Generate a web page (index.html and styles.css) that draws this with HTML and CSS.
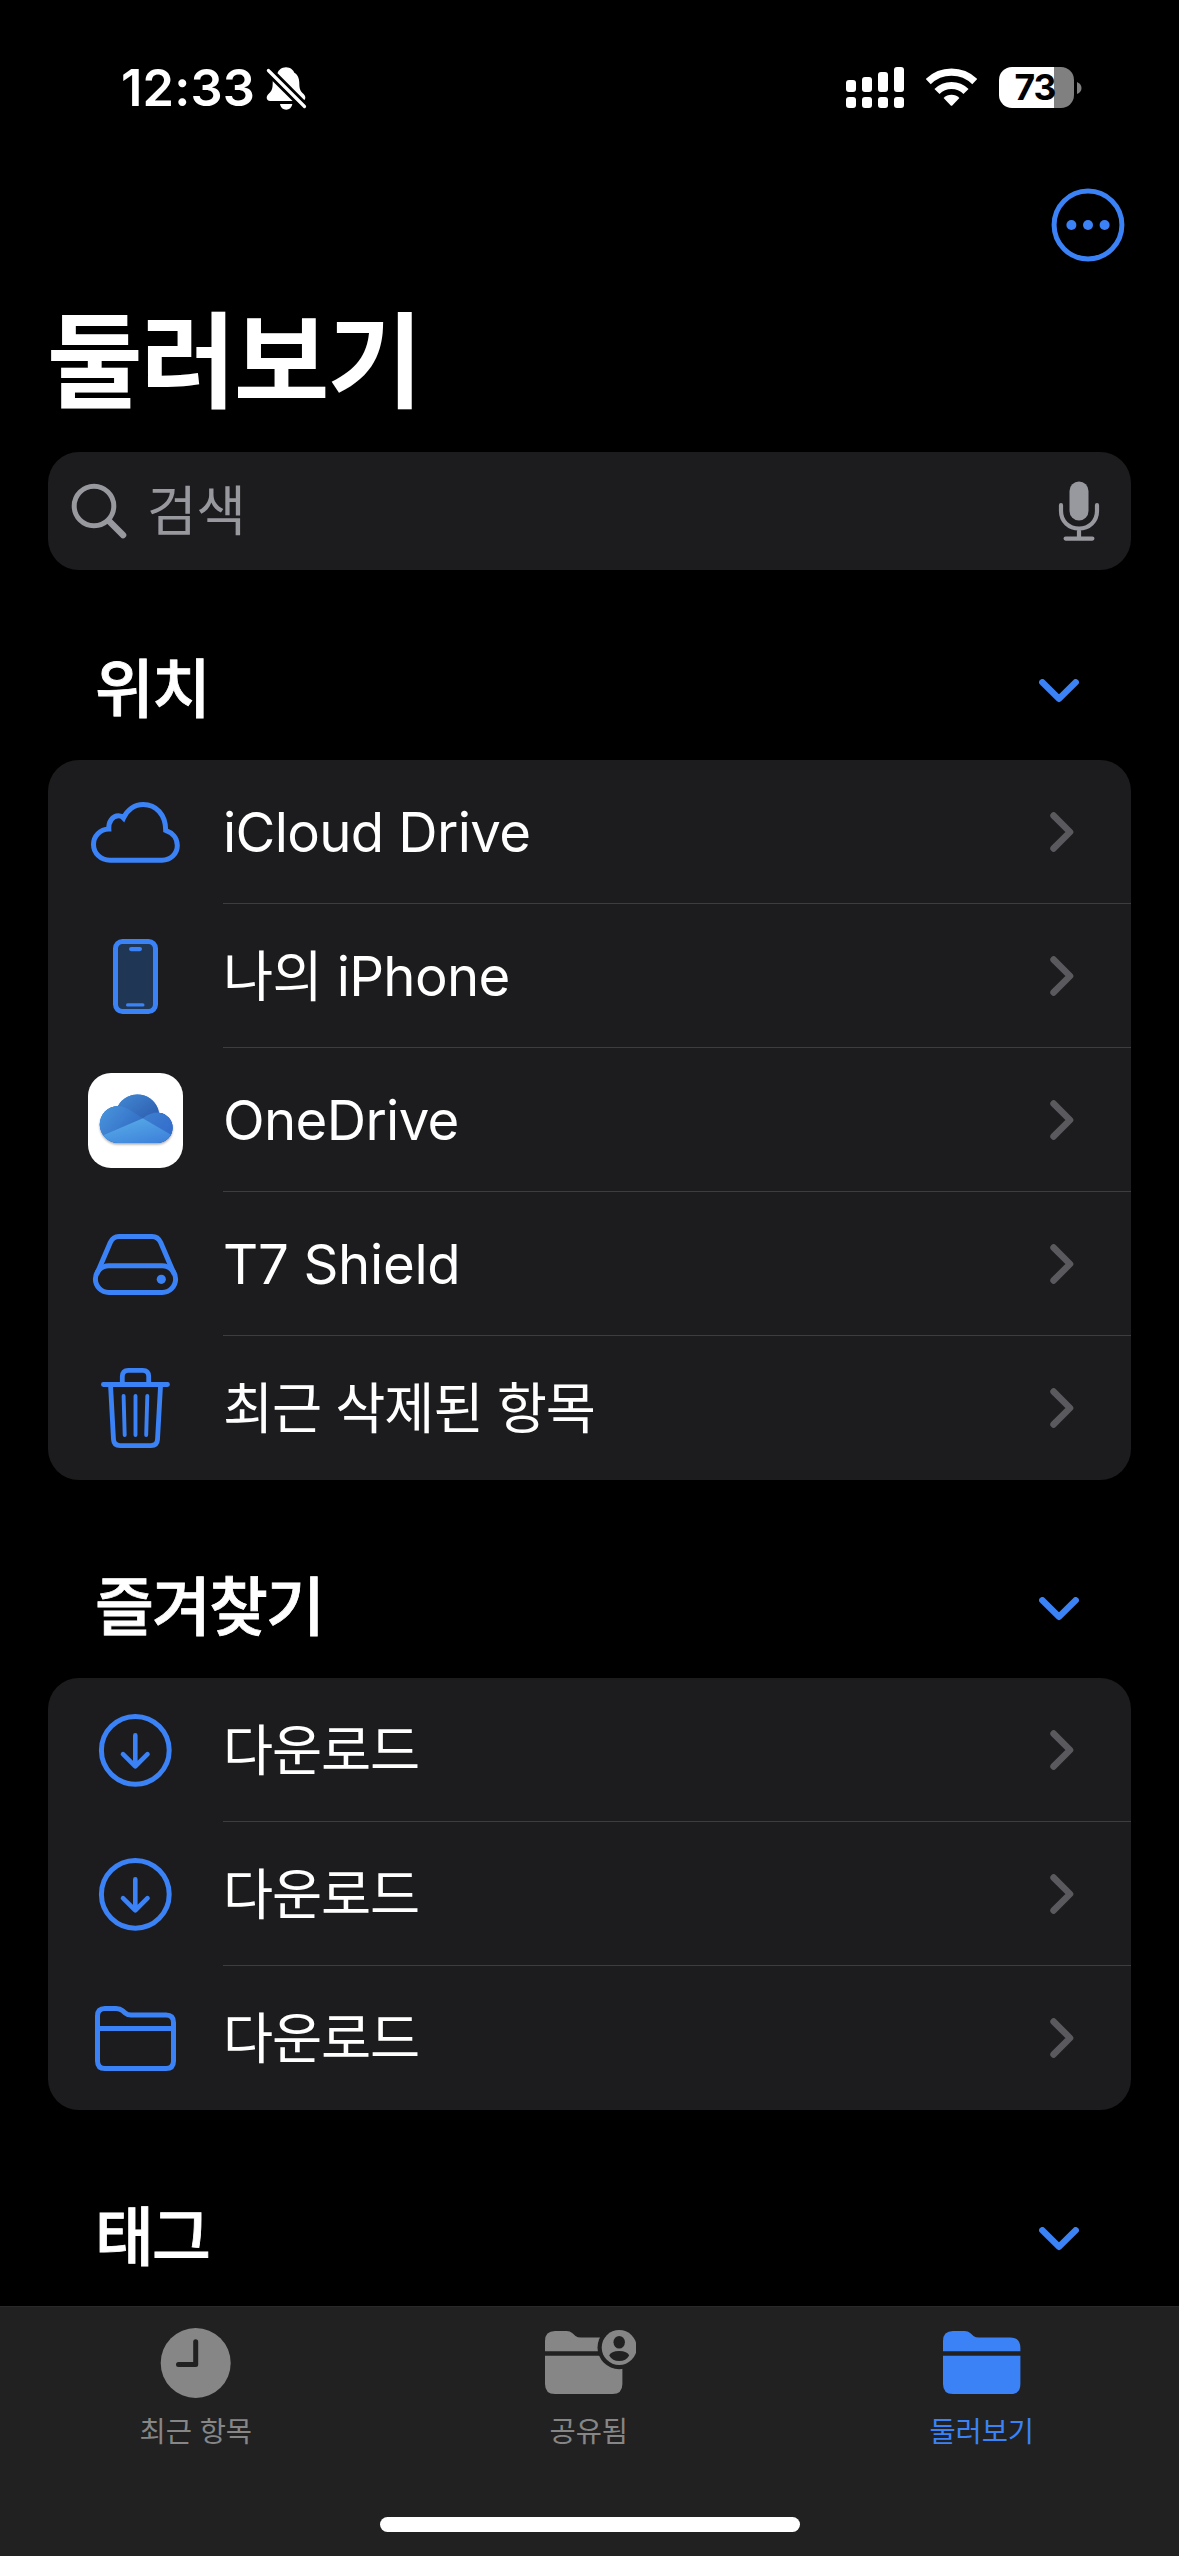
FILE: index.html
```html
<!DOCTYPE html>
<html lang="ko">
<head>
<meta charset="utf-8">
<title>둘러보기</title>
<link rel="stylesheet" href="styles.css">
</head>
<body>
<svg class="defs" width="0" height="0" aria-hidden="true">
  <defs>
    <symbol id="chevron-right" viewBox="0 0 24 40"><path d="M3.6 3.6 20 20 3.6 36.4" fill="none" stroke="currentColor" stroke-width="6.6" stroke-linecap="round" stroke-linejoin="round"/></symbol>
    <symbol id="chevron-down" viewBox="0 0 40 24"><path d="M3.3 3.3 20 19.8 36.7 3.3" fill="none" stroke="currentColor" stroke-width="6.4" stroke-linecap="round" stroke-linejoin="round"/></symbol>
    <symbol id="download" viewBox="0 0 96 96"><g fill="none" stroke="currentColor" stroke-linecap="round" stroke-linejoin="round"><circle cx="47.3" cy="48.3" r="33.9" stroke-width="5"/><path d="M47.3 35V65.5M35 53.8 47.3 66 59.5 53.8" stroke-width="4.6" transform="translate(0 -1.6)"/></g></symbol>
  </defs>
</svg>

<header class="status">
  <div class="status-left">
    <span class="time">12:33</span>
    <svg class="bell" width="42" height="45" viewBox="0 0 42 45">
      <path d="M20 1.3c4.500 0 7.500 3 8.300 5.500 3.600 2 5 6 5 10.200 0 6 1 8 4 10.800 1.500 1.500 2 2.500 2 4 0 2-1.300 3.200-3.500 3.200H4.200C2 35 .7 33.800.7 31.800c0-1.500.6-2.500 2-4 3-2.800 4-4.800 4-10.800 0-4.200 1.400-8.200 5-10.200C12.500 4.300 15.500 1.300 20 1.300zM14 38h12.300c-.5 3.500-3 5.700-6.100 5.700S14.500 41.500 14 38z" fill="#fff"/>
      <path d="M2.400 4.500 39 41" stroke="#000" stroke-width="9"/>
      <path d="M2.400 4.500 38.500 40.500" stroke="#fff" stroke-width="3.200" stroke-linecap="round"/>
    </svg>
  </div>
  <div class="status-right">
    <svg class="signal" width="58" height="41" viewBox="0 0 58 41" fill="#fff">
      <rect x="0" y="13" width="10" height="12" rx="3"/><rect x="16" y="10" width="10" height="15" rx="3"/><rect x="32" y="5" width="10" height="20" rx="3"/><rect x="48" y="0" width="10" height="25" rx="3"/>
      <rect x="0" y="30" width="10" height="11" rx="3"/><rect x="16" y="30" width="10" height="11" rx="3"/><rect x="32" y="30" width="10" height="11" rx="3"/><rect x="48" y="30" width="10" height="11" rx="3"/>
    </svg>
    <svg class="wifi" width="51" height="41" viewBox="0 0 51 41">
      <g fill="none" stroke="#fff" stroke-width="7.200"><path d="M2.200 14.600A33.300 33.300 0 0 1 48.800 14.600"/><path d="M11 24.500A20.500 20.500 0 0 1 40 24.500"/></g>
      <path d="M17.600 31.100A11.200 11.200 0 0 1 33.400 31.100L26.500 38.300Q25.500 39.300 24.500 38.300Z" fill="#fff"/>
    </svg>
    <div class="battery"><div class="battery-body">73</div><svg width="5" height="12" viewBox="0 0 5 12"><path d="M0 0Q4.500 2 4.500 6T0 12Z" fill="#808080"/></svg></div>
  </div>
</header>

<main class="content">
  <div class="toolbar">
    <svg width="74" height="74" viewBox="0 0 74 74"><circle cx="37" cy="37" r="33.900" fill="none" stroke="currentColor" stroke-width="5"/><g fill="currentColor"><circle cx="20.400" cy="37" r="5"/><circle cx="37" cy="37" r="5"/><circle cx="53.600" cy="37" r="5"/></g></svg>
  </div>
  <h1 class="title">둘러보기</h1>
  <div class="search">
    <svg width="56" height="56" viewBox="0 0 56 56" fill="none" stroke="currentColor" stroke-linecap="round"><circle cx="23" cy="23" r="19.800" stroke-width="5"/><path d="M38 38 52 52" stroke-width="6.600"/></svg>
    <span class="search-text">검색</span>
    <svg width="42" height="60" viewBox="0 0 42 60"><rect x="11.500" y="0.500" width="19" height="39" rx="9.500" fill="currentColor"/><path d="M3 24.200V30c0 10.500 8 17.500 18 17.500S39 40.500 39 30V24.200M21 48V57.600M7.600 57.600H34.400" fill="none" stroke="currentColor" stroke-width="4.200" stroke-linecap="round"/></svg>
  </div>

  <section class="group group-first">
    <div class="group-head"><h2>위치</h2><svg width="40" height="24"><use href="#chevron-down"/></svg></div>
    <ul class="card">
      <li class="row">
        <svg class="icon" viewBox="0 0 96 96"><path d="M22 76.200C12.500 76.200 5.500 69 5.500 60.500C5.500 52 12 45.300 20.800 45C20.300 38 24.500 31.800 30.500 31.800Q33.500 31.800 35.500 34C39 26 46.500 20.500 55.200 20.500C68 20.500 77.700 30.500 77.700 46.300C84 48.500 89.300 54 89.300 61.500C89.300 70 82.500 76.200 74 76.200Z" fill="none" stroke="currentColor" stroke-width="5"/></svg>
        <div class="cell"><span>iCloud Drive</span><svg class="go" width="24" height="40"><use href="#chevron-right"/></svg></div>
      </li>
      <li class="row">
        <svg class="icon" viewBox="0 0 96 96"><rect x="27.500" y="13.500" width="40" height="70" rx="7" fill="#203655" stroke="currentColor" stroke-width="5"/><rect x="41" y="19" width="13" height="4.200" rx="2.100" fill="currentColor"/><rect x="38" y="75.300" width="18.500" height="3.200" rx="1.600" fill="currentColor"/></svg>
        <div class="cell"><span>나의 iPhone</span><svg class="go" width="24" height="40"><use href="#chevron-right"/></svg></div>
      </li>
      <li class="row">
        <svg class="icon" viewBox="0 0 96 96">
          <defs>
            <linearGradient id="od-back" x1="0" y1="0" x2="1" y2="1"><stop offset="0.150" stop-color="#4289d2"/><stop offset="0.700" stop-color="#2a55aa"/></linearGradient>
            <linearGradient id="od-left" x1="0" y1="0" x2="1" y2="0.600"><stop offset="0" stop-color="#4b98de"/><stop offset="1" stop-color="#316bc4"/></linearGradient>
            <linearGradient id="od-right" x1="0" y1="0" x2="1" y2="1"><stop offset="0" stop-color="#3e80cf"/><stop offset="1" stop-color="#2f66cc"/></linearGradient>
            <linearGradient id="od-front" x1="0.200" y1="0" x2="0.900" y2="1"><stop offset="0" stop-color="#58ade8"/><stop offset="1" stop-color="#3a7bd9"/></linearGradient>
            <filter id="od-shadow" x="-10%" y="-10%" width="120%" height="130%"><feDropShadow dx="0" dy="1.500" stdDeviation="1" flood-color="#000" flood-opacity="0.350"/></filter>
            <clipPath id="od-clip"><path d="M30.500 71A18.500 18.500 0 1 1 30 34A22 22 0 0 1 71 40.700A15.200 15.200 0 0 1 70 71Z"/></clipPath>
          </defs>
          <rect x="0" y="1" width="95" height="95" rx="23" fill="#fff"/>
          <path d="M30.500 71A18.500 18.500 0 1 1 30 34A22 22 0 0 1 71 40.700A15.200 15.200 0 0 1 70 71Z" fill="#3a7bd9" filter="url(#od-shadow)"/>
          <g clip-path="url(#od-clip)">
            <rect x="10" y="20" width="78" height="54" fill="url(#od-back)"/>
            <path d="M54.800 46.300Q62 40.600 70 40.600H90V70Z" fill="url(#od-right)"/>
            <path d="M10 34H30Q36 34 41 37.500L54.800 46.300 15.600 63 10 66Z" fill="url(#od-left)"/>
            <path d="M54.800 46.300 82.500 62.600 88 74H10V65.500L15.600 63Z" fill="url(#od-front)"/>
          </g>
        </svg>
        <div class="cell"><span>OneDrive</span><svg class="go" width="24" height="40"><use href="#chevron-right"/></svg></div>
      </li>
      <li class="row">
        <svg class="icon" viewBox="0 0 96 96"><g fill="none" stroke="currentColor" stroke-width="5"><rect x="7.400" y="49.700" width="80.200" height="26.800" rx="13.400"/><path d="M8.600 58.500 22.300 26.500Q25 20.500 31 20.500H64Q70 20.500 72.700 26.500L86.400 58.500"/></g><circle cx="73.300" cy="63.300" r="4.600" fill="currentColor"/></svg>
        <div class="cell"><span class="label-open">T7 Shield</span><svg class="go" width="24" height="40"><use href="#chevron-right"/></svg></div>
      </li>
      <li class="row">
        <svg class="icon" viewBox="0 0 96 96"><g fill="none" stroke="currentColor" stroke-width="4.800" stroke-linecap="round"><path d="M15.400 24.500H79.500M34.300 24V16.500Q34.300 10.400 40.300 10.400H54.700Q60.700 10.400 60.700 16.500V24M22.600 26.500 25.500 79.500Q25.900 85.600 32 85.600H63Q69.100 85.600 69.500 79.500L72.500 26.500"/><path d="M35.600 36 36.700 75M47.500 36V75M59.300 36 58.200 75" stroke-width="3.900"/></g></svg>
        <div class="cell"><span class="label-ko">최근 삭제된 항목</span><svg class="go" width="24" height="40"><use href="#chevron-right"/></svg></div>
      </li>
    </ul>
  </section>

  <section class="group">
    <div class="group-head"><h2>즐겨찾기</h2><svg width="40" height="24"><use href="#chevron-down"/></svg></div>
    <ul class="card">
      <li class="row">
        <svg class="icon"><use href="#download"/></svg>
        <div class="cell"><span class="label-ko">다운로드</span><svg class="go" width="24" height="40"><use href="#chevron-right"/></svg></div>
      </li>
      <li class="row">
        <svg class="icon"><use href="#download"/></svg>
        <div class="cell"><span class="label-ko">다운로드</span><svg class="go" width="24" height="40"><use href="#chevron-right"/></svg></div>
      </li>
      <li class="row">
        <svg class="icon" viewBox="0 0 96 96"><path d="M9.500 26Q9.500 18.500 17 18.500H28Q32 18.500 34.500 20.700L37 22.800Q39.500 25 43 25H78Q85.500 25 85.500 32.500V71Q85.500 78.500 78 78.500H17Q9.500 78.500 9.500 71ZM9.500 38.500H85.500" fill="none" stroke="currentColor" stroke-width="5"/></svg>
        <div class="cell"><span class="label-ko">다운로드</span><svg class="go" width="24" height="40"><use href="#chevron-right"/></svg></div>
      </li>
    </ul>
  </section>

  <section class="group">
    <div class="group-head"><h2>태그</h2><svg width="40" height="24"><use href="#chevron-down"/></svg></div>
  </section>
</main>

<nav class="tabs">
  <div class="tab-list">
    <div class="tab">
      <svg width="79" height="70" viewBox="0 0 79 70"><circle cx="38.700" cy="35" r="35" fill="currentColor"/><path d="M38.700 13.700V36.600H21.500" fill="none" stroke="#212121" stroke-width="5" stroke-linecap="round" stroke-linejoin="round"/></svg>
      <span>최근 항목</span>
    </div>
    <div class="tab">
      <svg width="92" height="70" viewBox="0 0 92 70">
        <g fill="currentColor" transform="translate(1 3)"><path d="M0 10Q0 0 10 0H21.500Q25 0 27.500 2.200L30.500 4.900Q32.500 6.400 36 6.400H67Q77.400 6.400 77.400 17V20.200H0ZM0 24.800H77.400V53Q77.400 63 67.400 63H10Q0 63 0 53Z"/></g>
        <circle cx="75.200" cy="19.500" r="21.700" fill="#212121"/>
        <circle cx="75.200" cy="19.500" r="17.500" fill="currentColor"/>
        <ellipse cx="75.200" cy="14.300" rx="5.700" ry="6.300" fill="#212121"/>
        <path d="M65.200 27.500Q67 23 75.200 23T85.200 27.500Q82 33 75.200 33T65.200 27.500Z" fill="#212121"/>
      </svg>
      <span>공유됨</span>
    </div>
    <div class="tab tab-active">
      <svg width="79" height="70" viewBox="0 0 79 70"><g fill="currentColor" transform="translate(0 3)"><path d="M0 10Q0 0 10 0H21.500Q25 0 27.500 2.200L30.500 4.900Q32.500 6.400 36 6.400H67Q77.400 6.400 77.400 17V20.200H0ZM0 24.800H77.400V53Q77.400 63 67.400 63H10Q0 63 0 53Z"/></g></svg>
      <span>둘러보기</span>
    </div>
  </div>
  <div class="home-indicator"></div>
</nav>
</body>
</html>
```

FILE: styles.css
```css
* {
  box-sizing: border-box;
  margin: 0;
  padding: 0;
}

body {
  display: flex;
  flex-direction: column;
  width: 1179px;
  height: 2556px;
  overflow: hidden;
  background: #000;
  color: #fff;
  font-family: Inter, "Noto Sans CJK KR", sans-serif;
}

svg {
  display: block;
  flex: none;
}

.defs {
  display: none;
}

/* Status bar */
.status {
  flex: none;
  display: flex;
  justify-content: space-between;
  height: 176px;
  padding: 0 97px 0 121px;
}

.status-left,
.status-right {
  display: flex;
  align-items: center;
}

.status-right {
  height: 175px;
}

.time {
  width: 145px;
  font-size: 50.5px;
  font-weight: 600;
  line-height: 60px;
  letter-spacing: 0.2px;
}

.signal {
  margin-right: 22px;
}

.wifi {
  margin-right: 22px;
}

.battery {
  display: flex;
  align-items: center;
  gap: 3px;
}

.battery-body {
  width: 75px;
  height: 41px;
  padding-right: 3px;
  border-radius: 13px;
  background: linear-gradient(90deg, #fff 55px, #808080 55px);
  color: #000;
  font-size: 35.5px;
  font-weight: 700;
  line-height: 42px;
  letter-spacing: -1px;
  text-align: center;
}

/* Scrolling content */
.content {
  flex: 1;
  min-height: 0;
  overflow: hidden;
  padding: 0 48px;
}

.toolbar {
  display: flex;
  justify-content: flex-end;
  align-items: center;
  height: 97px;
  padding-right: 5.7px;
  color: #3b82f7;
}

.title {
  height: 179px;
  margin-left: -1px;
  font-size: 104px;
  font-weight: 700;
  line-height: 179px;
  letter-spacing: -2.3px;
}

.search {
  display: flex;
  align-items: center;
  height: 118px;
  padding: 0 31px 0 23px;
  border-radius: 31px;
  background: #1c1c1e;
  color: #98989f;
}

.search-text {
  flex: 1;
  padding: 2px 0 0 20px;
  font-size: 54px;
  line-height: 80px;
  letter-spacing: -0.4px;
}

.group {
  padding-top: 68px;
}

.group-first {
  padding-top: 60px;
}

.group-head {
  display: flex;
  justify-content: space-between;
  align-items: center;
  height: 130px;
  padding: 0 52px 12px 47px;
}

.group-head svg {
  margin-top: 4px;
  color: #3b82f7;
}

.group-head h2 {
  font-size: 64px;
  font-weight: 500;
  line-height: 90px;
  letter-spacing: -1.9px;
  -webkit-text-stroke: 0.8px currentColor;
}

.card {
  overflow: hidden;
  border-radius: 31px;
  background: #1c1c1e;
  list-style: none;
}

.row {
  display: flex;
  align-items: center;
  gap: 39px;
  height: 144px;
  padding-left: 40px;
}

.icon {
  width: 96px;
  height: 96px;
  color: #3b82f7;
}

.cell {
  flex: 1;
  display: flex;
  justify-content: space-between;
  align-items: center;
  height: 144px;
  padding-right: 57px;
  border-bottom: 1px solid #3d3d40;
  font-size: 54.5px;
  line-height: 80px;
  letter-spacing: -0.65px;
}

.label-ko {
  letter-spacing: -1.1px;
}

.label-open {
  font-kerning: none;
  letter-spacing: -0.3px;
}

.row:last-child .cell {
  border-bottom-color: transparent;
}

.go {
  color: #5a5a5e;
}

/* Tab bar */
.tabs {
  flex: none;
  display: flex;
  flex-direction: column;
  justify-content: space-between;
  height: 250px;
  padding: 21px 0 24px;
  border-top: 1px solid #292929;
  background: #212121;
}

.tab-list {
  display: grid;
  grid-template-columns: repeat(3, 393px);
}

.tab {
  display: flex;
  flex-direction: column;
  align-items: center;
  gap: 14px;
  color: #868686;
  font-size: 28.5px;
  line-height: 40px;
  letter-spacing: -0.1px;
}

.tab span {
  padding-right: 1.5px;
}

.tab-active {
  color: #3b82f7;
}

.home-indicator {
  align-self: center;
  width: 420px;
  height: 15px;
  border-radius: 8px;
  background: #fff;
}
```
